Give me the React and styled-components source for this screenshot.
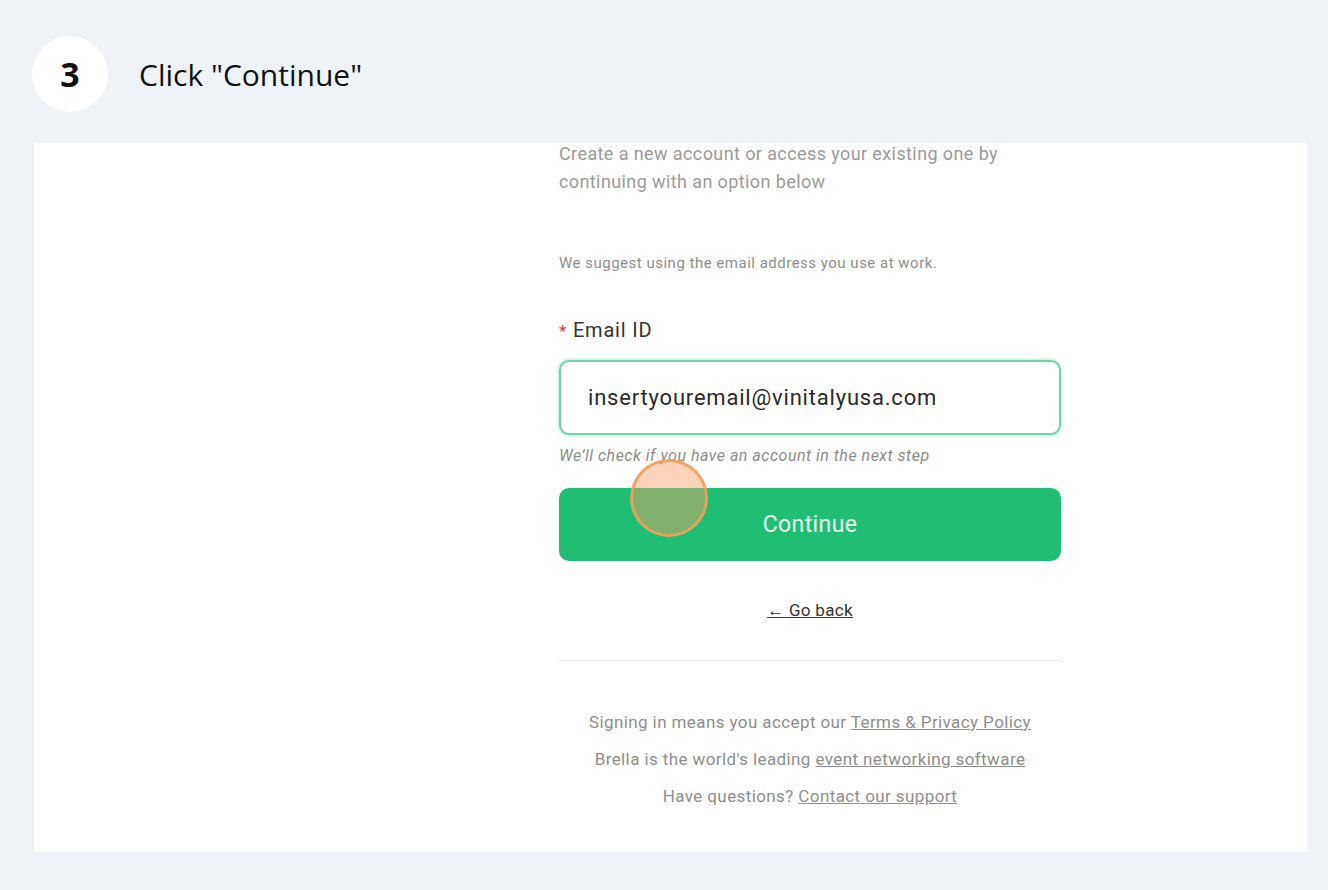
import React from 'react';
import styled, { createGlobalStyle } from 'styled-components';

const GlobalStyle = createGlobalStyle`
  html, body {
    margin: 0;
    padding: 0;
    background: #eff3f8;
  }
  #root {
    height: 890px;
  }
`;

const App = () => {
  return (
    <>
      <GlobalStyle />
      <Page>
        <StepHeader>
          <StepNumber>3</StepNumber>
          <StepTitle>Click "Continue"</StepTitle>
        </StepHeader>
        <Shot>
          <Column>
            <Intro>
              Create a new account or access your existing one by continuing with an option below
            </Intro>
            <Hint>We suggest using the email address you use at work.</Hint>
            <Label>
              <Required>*</Required> Email ID
            </Label>
            <EmailInput>insertyouremail@vinitalyusa.com</EmailInput>
            <Helper>We’ll check if you have an account in the next step</Helper>
            <ButtonWrap>
              <ContinueButton>Continue</ContinueButton>
              <ClickMarker />
            </ButtonWrap>
            <GoBack>← Go back</GoBack>
            <Divider />
            <Footer>
              <FooterLine>
                Signing in means you accept our <FooterLink>Terms &amp; Privacy Policy</FooterLink>
              </FooterLine>
              <FooterLine>
                Brella is the world's leading <FooterLink>event networking software</FooterLink>
              </FooterLine>
              <FooterLine>
                Have questions? <FooterLink>Contact our support</FooterLink>
              </FooterLine>
            </Footer>
          </Column>
        </Shot>
      </Page>
    </>
  );
};

export default App;

const Page = styled.div`
  height: 890px;
  display: flex;
  flex-direction: column;
  background: #eff3f8;
  overflow: hidden;
`;

const StepHeader = styled.div`
  display: flex;
  align-items: center;
  height: 143px;
  padding: 5px 0 0 32px;
  box-sizing: border-box;
`;

const StepNumber = styled.div`
  width: 76px;
  height: 76px;
  border-radius: 50%;
  background: #ffffff;
  display: flex;
  align-items: center;
  justify-content: center;
  font-family: 'Open Sans', 'Noto Sans', sans-serif;
  font-weight: 700;
  font-size: 34px;
  color: #111;
`;

const StepTitle = styled.div`
  margin-left: 31px;
  font-family: 'Open Sans', 'Noto Sans', sans-serif;
  font-size: 30px;
  color: #111;
`;

const Shot = styled.div`
  margin-left: 34px;
  width: 1273px;
  height: 709px;
  background: #ffffff;
  overflow: hidden;
  display: flex;
  justify-content: flex-start;
  padding-left: 525px;
  box-sizing: border-box;
`;

const Column = styled.div`
  width: 502px;
  display: flex;
  flex-direction: column;
  margin-top: -3px;
  font-family: Roboto, 'Noto Sans', sans-serif;
`;

const Intro = styled.p`
  margin: 0;
  font-size: 18px;
  line-height: 28px;
  letter-spacing: 0.4px;
  color: #9a9a9a;
  padding-right: 50px;
`;

const Hint = styled.p`
  margin: 57px 0 0;
  font-size: 15px;
  line-height: 20px;
  letter-spacing: 0.5px;
  color: #8e8e8e;
`;

const Label = styled.div`
  margin-top: 44px;
  font-size: 20px;
  line-height: 26px;
  letter-spacing: 0.8px;
  color: #333;
`;

const Required = styled.span`
  color: #d43c3c;
  font-size: 17px;
`;

const EmailInput = styled.div`
  margin-top: 16px;
  height: 75px;
  box-sizing: border-box;
  border: 2px solid #6fd3a6;
  border-radius: 10px;
  box-shadow: 0 0 3px 1px rgba(111, 211, 166, 0.45);
  display: flex;
  align-items: center;
  padding-left: 27px;
  font-size: 22px;
  letter-spacing: 0.8px;
  color: #2a2a2a;
`;

const Helper = styled.div`
  margin-top: 11px;
  font-size: 16px;
  line-height: 20px;
  letter-spacing: 0.5px;
  font-style: italic;
  color: #8c8c8c;
`;

const ButtonWrap = styled.div`
  position: relative;
  margin-top: 22px;
`;

const ContinueButton = styled.div`
  height: 73px;
  border-radius: 10px;
  background: #20bd75;
  display: flex;
  align-items: center;
  justify-content: center;
  font-size: 23px;
  letter-spacing: 0.4px;
  color: #e6fff0;
`;

const ClickMarker = styled.div`
  position: absolute;
  left: 71px;
  top: -29px;
  width: 78px;
  height: 78px;
  box-sizing: border-box;
  border-radius: 50%;
  border: 3px solid rgba(240, 160, 90, 0.9);
  background: rgba(250, 160, 100, 0.45);
`;

const GoBack = styled.div`
  margin-top: 38px;
  align-self: center;
  font-size: 17px;
  line-height: 22px;
  letter-spacing: 0.3px;
  color: #333;
  text-decoration: underline;
`;

const Divider = styled.div`
  margin-top: 39px;
  height: 1px;
  background: #ebebeb;
`;

const Footer = styled.div`
  margin-top: 43px;
  display: flex;
  flex-direction: column;
`;

const FooterLine = styled.div`
  text-align: center;
  font-size: 17px;
  line-height: 37px;
  letter-spacing: 0.4px;
  color: #8e8e8e;
`;

const FooterLink = styled.span`
  text-decoration: underline;
`;
